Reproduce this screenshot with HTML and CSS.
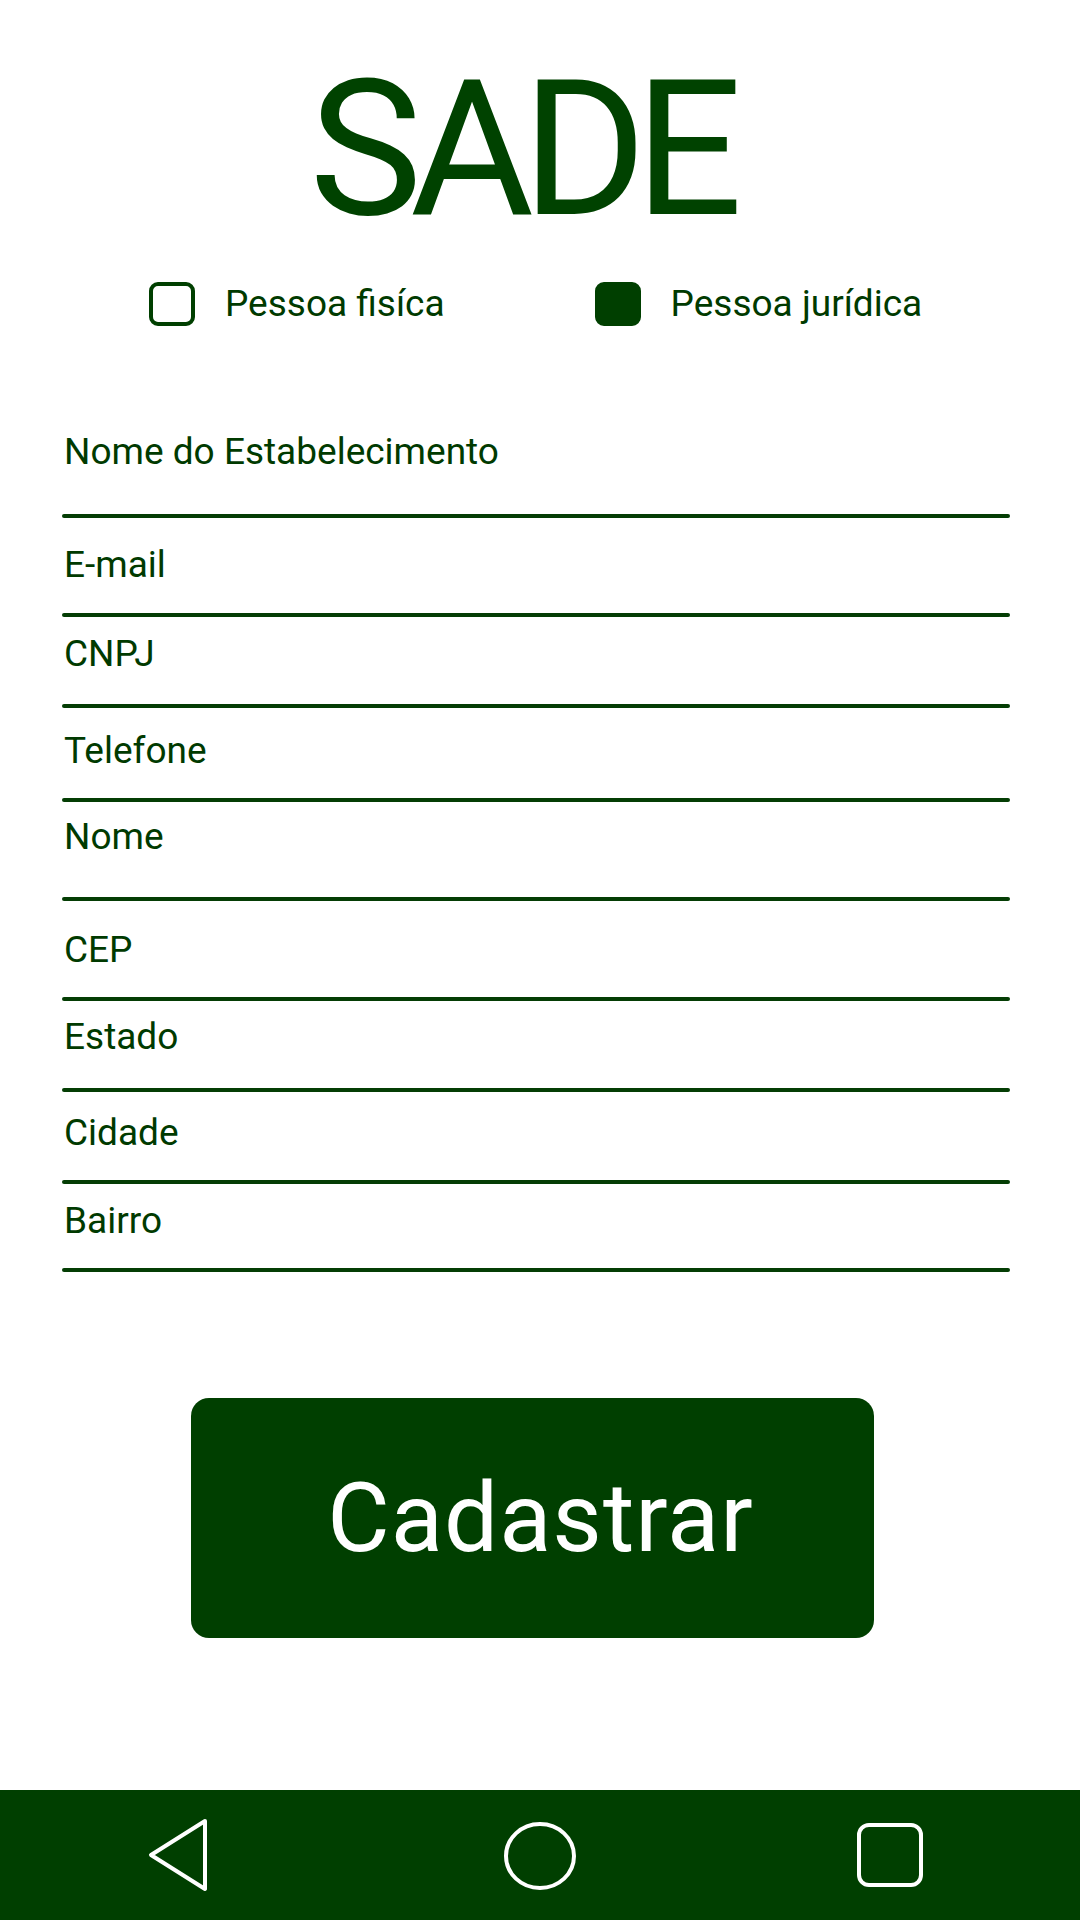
FILE: index.html
```html
<!DOCTYPE html>
<html lang="pt-BR">
<head>
<meta charset="utf-8">
<title>SADE - Cadastro</title>
<link rel="stylesheet" href="styles.css">
</head>
<body>
<div class="screen">
  <main class="content">
    <h1 class="title">SADE</h1>
    <div class="options">
      <label class="option option-pf">
        <span class="box"></span>
        <span class="option-text">Pessoa fisíca</span>
      </label>
      <label class="option option-pj">
        <span class="box box-checked"></span>
        <span class="option-text">Pessoa jurídica</span>
      </label>
    </div>
    <form class="form">
      <div class="field f1"><span class="label">Nome do Estabelecimento</span><span class="line"></span></div>
      <div class="field f2"><span class="label">E-mail</span><span class="line"></span></div>
      <div class="field f3"><span class="label">CNPJ</span><span class="line"></span></div>
      <div class="field f4"><span class="label">Telefone</span><span class="line"></span></div>
      <div class="field f5"><span class="label">Nome</span><span class="line"></span></div>
      <div class="field f6"><span class="label">CEP</span><span class="line"></span></div>
      <div class="field f7"><span class="label">Estado</span><span class="line"></span></div>
      <div class="field f8"><span class="label">Cidade</span><span class="line"></span></div>
      <div class="field f9"><span class="label">Bairro</span><span class="line"></span></div>
    </form>
    <div class="actions">
      <button class="submit" type="button">Cadastrar</button>
    </div>
  </main>
  <nav class="navbar">
    <svg class="nav-icon nav-back" width="80" height="80" viewBox="0 0 80 80">
      <path d="M67 6 L13 40 L67 74 Z" fill="none" stroke="#fff" stroke-width="4" stroke-linejoin="round"/>
    </svg>
    <svg class="nav-icon nav-home" width="80" height="80" viewBox="0 0 80 80">
      <ellipse cx="40" cy="41" rx="34" ry="32" fill="none" stroke="#fff" stroke-width="4"/>
    </svg>
    <svg class="nav-icon nav-recent" width="80" height="80" viewBox="0 0 80 80">
      <rect x="9" y="10" width="62" height="60" rx="10" fill="none" stroke="#fff" stroke-width="4"/>
    </svg>
  </nav>
</div>
</body>
</html>
```

FILE: styles.css
```css
* { box-sizing: border-box; }

html, body {
  margin: 0;
  padding: 0;
  background: #ffffff;
}

body {
  font-family: Roboto, "Liberation Sans", sans-serif;
  color: #003a00;
}

.screen {
  width: 1080px;
  height: 1920px;
  display: flex;
  flex-direction: column;
}

.content {
  flex: 1;
  display: flex;
  flex-direction: column;
}

.title {
  margin: 0;
  padding: 49px 40px 0 0;
  text-align: center;
  font-size: 190px;
  font-weight: 400;
  line-height: 200px;
  color: #004200;
  letter-spacing: -12px;
}

.options {
  display: flex;
  align-items: center;
  padding: 25px 0 0 149px;
  height: 85px;
}

.option {
  display: flex;
  align-items: center;
  gap: 30px;
}

.option-pj {
  margin-left: 150px;
}

.box {
  width: 46px;
  height: 44px;
  border: 4px solid #003f00;
  border-radius: 9px;
}

.box-checked {
  background: #003f00;
}

.option-text {
  font-size: 37px;
  line-height: 40px;
}

.form {
  display: flex;
  flex-direction: column;
  padding: 0 70px 0 62px;
  margin-top: 98px;
}

.field {
  display: flex;
  flex-direction: column;
}

.label {
  display: block;
  font-size: 37px;
  line-height: 40px;
  padding-left: 2px;
}

.line {
  display: block;
  height: 4px;
  border-radius: 2px;
  background: #043d04;
}

.f1 .label { margin-bottom: 42px; }
.f2 { padding-top: 27px; }
.f2 .label { margin-bottom: 28px; }
.f3 { padding-top: 17px; }
.f3 .label { margin-bottom: 30px; }
.f4 { padding-top: 23px; }
.f4 .label { margin-bottom: 27px; }
.f5 { padding-top: 15px; }
.f5 .label { margin-bottom: 40px; }
.f6 { padding-top: 29px; }
.f6 .label { margin-bottom: 27px; }
.f7 { padding-top: 16px; }
.f7 .label { margin-bottom: 31px; }
.f8 { padding-top: 21px; }
.f8 .label { margin-bottom: 27px; }
.f9 { padding-top: 17px; }
.f9 .label { margin-bottom: 27px; }

.actions {
  display: flex;
  padding: 126px 0 0 191px;
}

.submit {
  width: 683px;
  height: 240px;
  border: none;
  border-radius: 18px;
  background: #003f00;
  color: #ffffff;
  font-family: Roboto, "Liberation Sans", sans-serif;
  font-size: 96px;
  font-weight: 400;
  padding: 0 0 0 16px;
  letter-spacing: 1px;
}

.navbar {
  height: 130px;
  background: #003f00;
  display: flex;
  align-items: center;
  padding-left: 138px;
}

.nav-home { margin-left: 282px; }
.nav-recent { margin-left: 270px; }
```
